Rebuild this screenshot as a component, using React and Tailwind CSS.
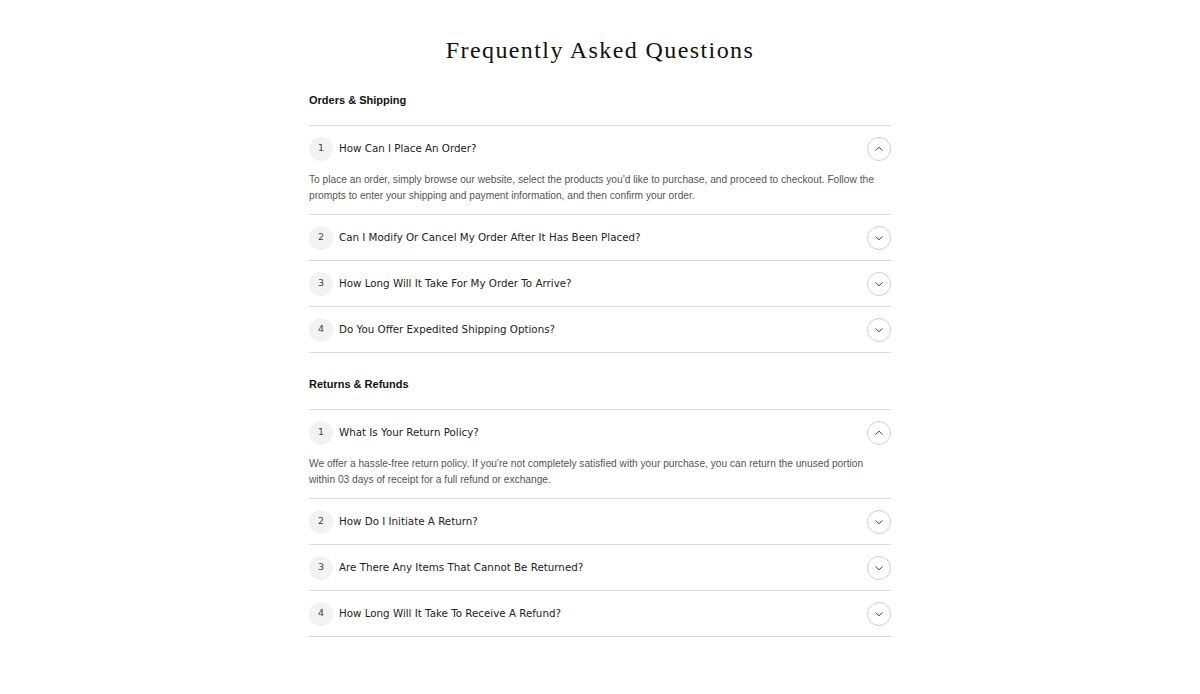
import React from "react";

const sections = [
  {
    title: "Orders & Shipping",
    items: [
      {
        q: "How Can I Place An Order?",
        a: "To place an order, simply browse our website, select the products you'd like to purchase, and proceed to checkout. Follow the prompts to enter your shipping and payment information, and then confirm your order.",
        open: true,
      },
      { q: "Can I Modify Or Cancel My Order After It Has Been Placed?" },
      { q: "How Long Will It Take For My Order To Arrive?" },
      { q: "Do You Offer Expedited Shipping Options?" },
    ],
  },
  {
    title: "Returns & Refunds",
    items: [
      {
        q: "What Is Your Return Policy?",
        a: "We offer a hassle-free return policy. If you're not completely satisfied with your purchase, you can return the unused portion within 03 days of receipt for a full refund or exchange.",
        open: true,
      },
      { q: "How Do I Initiate A Return?" },
      { q: "Are There Any Items That Cannot Be Returned?" },
      { q: "How Long Will It Take To Receive A Refund?" },
    ],
  },
];

function Chevron({ up }) {
  return (
    <span className="flex h-[24px] w-[24px] items-center justify-center rounded-full border border-[#cfcfcf]">
      <svg width="10" height="10" viewBox="0 0 10 10" fill="none">
        {up ? (
          <polyline points="1.5,6.5 5,3.2 8.5,6.5" stroke="#333" strokeWidth="0.9" />
        ) : (
          <polyline points="1.5,3.5 5,6.8 8.5,3.5" stroke="#333" strokeWidth="0.9" />
        )}
      </svg>
    </span>
  );
}

function Item({ n, item }) {
  return (
    <div className="border-t border-[#dcdcdc]">
      <div className="flex h-[45px] items-center">
        <span className="flex h-[24px] w-[24px] items-center justify-center rounded-full bg-[#f2f2f2] text-[9.5px] text-[#444] [font-family:'DejaVu_Sans',sans-serif]">
          {n}
        </span>
        <span className="ml-[6px] mt-[1px] flex-1 text-[10.3px] text-[#222] [font-family:'DejaVu_Sans',sans-serif]">
          {item.q}
        </span>
        <Chevron up={item.open} />
      </div>
      {item.open && (
        <p className="pb-[10px] pt-[1px] text-[10.2px] leading-[16px] text-[#555] [font-family:'Liberation_Sans',sans-serif]">
          {item.a}
        </p>
      )}
    </div>
  );
}

export default function App() {
  return (
    <div className="min-h-[694px] bg-white pt-[36px]">
      <h1 className="text-center text-[24px] leading-[28px] tracking-[1.4px] text-[#111] [font-family:'Liberation_Serif',serif]">
        Frequently Asked Questions
      </h1>
      <div className="mx-auto w-[582px]">
        {sections.map((s, si) => (
          <div key={si} className={si === 0 ? "mt-[28px]" : "mt-[23px]"}>
            <h2 className="mb-[17px] text-[11px] font-semibold leading-[16px] text-[#111] [font-family:'Liberation_Sans',sans-serif]">
              {s.title}
            </h2>
            <div className="border-b border-[#dcdcdc]">
              {s.items.map((it, i) => (
                <Item key={i} n={i + 1} item={it} />
              ))}
            </div>
          </div>
        ))}
      </div>
    </div>
  );
}
